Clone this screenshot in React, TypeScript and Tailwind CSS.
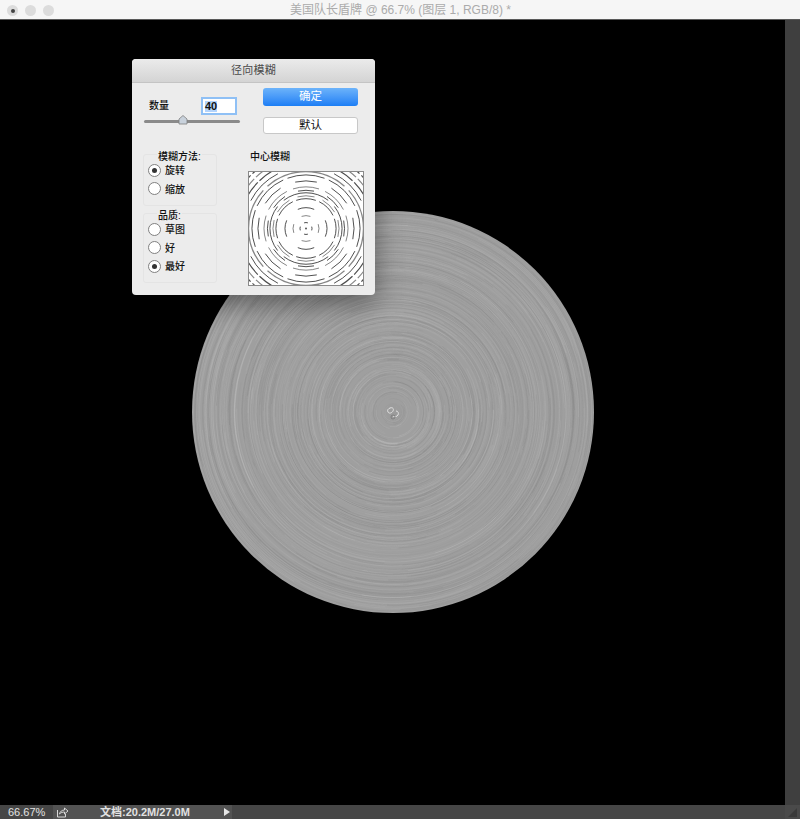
import React from 'react';

const FONT = '"Liberation Sans", "Noto Sans CJK SC", sans-serif';

// small seeded random so the disc looks the same on every render
const makeRandom = (seed: number) => () => {
  seed = (seed * 1664525 + 1013904223) % 4294967296;
  return seed / 4294967296;
};

const polar = (cx: number, cy: number, r: number, a: number) => ({
  x: cx + r * Math.cos(a),
  y: cy + r * Math.sin(a),
});

const arcPath = (cx: number, cy: number, r: number, start: number, sweep: number) => {
  const a = polar(cx, cy, r, start);
  const b = polar(cx, cy, r, start + sweep);
  return `M${a.x.toFixed(1)} ${a.y.toFixed(1)}A${r} ${r} 0 ${sweep > Math.PI ? 1 : 0} 1 ${b.x.toFixed(1)} ${b.y.toFixed(1)}`;
};

const discArcs = (() => {
  const random = makeRandom(42);
  const arcs: { d: string; light: boolean; o: number; w: number }[] = [];
  for (let r = 3; r < 200; r += 0.7) {
    const count = r < 30 ? 1 : 4;
    for (let i = 0; i < count; i++) {
      arcs.push({
        d: arcPath(201, 201, r, random() * Math.PI * 2, 0.6 + random() * 1.8),
        light: random() > 0.5,
        o: 0.03 + random() * 0.08,
        w: 0.5 + random() * 0.4,
      });
    }
  }
  return arcs;
})();

const BlurDisc = () => (
  <svg width="402" height="402" viewBox="0 0 402 402" className="absolute left-[192px] top-[191px]">
    <circle cx="201" cy="201" r="201" fill="#9f9f9f" />
    {discArcs.map((a, i) => (
      <path key={i} d={a.d} fill="none" stroke={a.light ? '#ffffff' : '#444444'} strokeOpacity={a.o} strokeWidth={a.w} />
    ))}
    <circle cx="201" cy="201" r="26" fill="none" stroke="#c4c4c4" strokeOpacity="0.25" strokeWidth="1" />
    <circle cx="201" cy="201" r="46" fill="none" stroke="#c4c4c4" strokeOpacity="0.18" strokeWidth="1" />
    <circle cx="201" cy="201" r="9" fill="#999999" fillOpacity="0.4" />
    <path d="M198 197c3-1 4 1 3 3s-4 3-5 1 0-3 2-4zM204 200c2 0 3 2 2 4s-4 2-5 1" fill="none" stroke="#e2e2e2" strokeWidth="1" />
    <circle cx="201" cy="206" r="2" fill="none" stroke="#777777" strokeWidth="0.8" />
  </svg>
);

// n arcs per ring (4 = on the axes, 8 = axes and diagonals), half = half length in degrees
const previewRings = [
  { r: 6, n: 4, half: 18, w: 1 },
  { r: 13, n: 4, half: 20, w: 1 },
  { r: 21, n: 4, half: 23, w: 1 },
  { r: 30, n: 8, half: 19, w: 1 },
  { r: 33, n: 8, half: 15, w: 1 },
  { r: 36, n: 4, half: 38, w: 1 },
  { r: 38.500, n: 8, half: 12, w: 1 },
  { r: 42, n: 8, half: 18, w: 1 },
  { r: 48, n: 8, half: 13, w: 1 },
  { r: 54, n: 8, half: 20, w: 1 },
  { r: 57.500, n: 4, half: 42, w: 1.300 },
  { r: 62, n: 8, half: 18, w: 1 },
  { r: 67, n: 4, half: 44, w: 1.200 },
  { r: 72, n: 4, half: 44, w: 1.200 },
  { r: 77, n: 4, half: 44, w: 1.200 },
  { r: 82, n: 4, half: 44, w: 1.200 },
];

const previewArcs = previewRings.flatMap((ring, ringIndex) =>
  Array.from({ length: ring.n }, (_, i) => ({
    key: `${ringIndex}-${i}`,
    d: arcPath(58, 58, ring.r, (i * 2 * Math.PI) / ring.n - (ring.half * Math.PI) / 180, (ring.half * Math.PI) / 90),
    w: ring.w,
    o: ringIndex % 3 === 1 ? 0.55 : 0.8,
  }))
);

const Preview = () => (
  <svg width="116" height="115" viewBox="0 0 116 116" preserveAspectRatio="none" className="block bg-white">
    {previewArcs.map((a) => (
      <path key={a.key} d={a.d} fill="none" stroke="#222222" strokeOpacity={a.o} strokeWidth={a.w} />
    ))}
    <circle cx="58" cy="58" r="1" fill="#555555" />
    <rect x="0.5" y="0.5" width="115" height="115" fill="none" stroke="#8a8a8a" />
  </svg>
);

const Radio = ({ label, checked }: { label: string; checked?: boolean }) => (
  <div className="flex h-[18.5px] items-center gap-[4px]">
    <span className="mt-[-2px] flex h-[13px] w-[13px] items-center justify-center rounded-full border border-[#808080] bg-white">
      {checked && <span className="h-[5px] w-[5px] rounded-full bg-[#333333]" />}
    </span>
    <span className="text-[10px] font-medium leading-none text-[#111111]">{label}</span>
  </div>
);

const GroupBox = ({ title, className, children }: { title: string; className: string; children: React.ReactNode }) => (
  <div className={`relative w-[74px] rounded-[3px] border border-[#e4e4e4] pl-[4px] ${className}`}>
    <span className="absolute left-[13px] top-[-3px] bg-[#ececec] px-[1px] text-[10px] font-medium leading-none text-[#111111]">
      {title}
    </span>
    {children}
  </div>
);

const BlurDialog = () => (
  <div className="absolute left-[132px] top-[39px] h-[236px] w-[243px] overflow-hidden rounded-[4px] bg-[#ececec] shadow-[0_8px_28px_rgba(0,0,0,0.45)]">
    <div className="flex h-[24px] items-center justify-center border-b border-[#c4c4c4] bg-gradient-to-b from-[#ebebeb] to-[#d4d4d4] text-[11px] tracking-[0.3px] text-[#4a4a4a]">
      径向模糊
    </div>
    <div className="flex">
      <div className="w-[116px] pl-[11px]">
        <div className="flex items-start pl-[6px] pt-[16px]">
          <span className="mt-[-1px] w-[54px] text-[10px] font-medium leading-[16px] text-[#111111]">数量</span>
          <span className="flex h-[14px] w-[32px] items-center bg-white pl-[2px] text-[11px] font-bold leading-none text-[#111111] shadow-[0_0_0_2px_#8fc0f5]">
            <span className="bg-[#b3d4fc]">40</span>
          </span>
        </div>
        <div className="relative ml-[1px] mt-[3px] h-[9px] w-[96px]">
          <div className="absolute left-0 right-0 top-[3px] h-[3px] rounded-full bg-[#8a8a8a]" />
          <svg width="10" height="10" viewBox="0 0 10 10" className="absolute left-[34px] top-[-2px]">
            <path d="M5 .5 9 4v5H1V4z" fill="#c9d2dc" stroke="#7f7f7f" strokeWidth="0.8" />
          </svg>
        </div>
        <GroupBox title="模糊方法:" className="mt-[28px] h-[52px] pt-[7px]">
          <Radio label="旋转" checked />
          <Radio label="缩放" />
        </GroupBox>
        <GroupBox title="品质:" className="mt-[7px] h-[70px] pt-[7px]">
          <Radio label="草图" />
          <Radio label="好" />
          <Radio label="最好" checked />
        </GroupBox>
      </div>
      <div className="flex-1">
        <div className="ml-[15px] mt-[5px] flex h-[18px] w-[95px] items-center justify-center rounded-[3px] bg-gradient-to-b from-[#6cb3fa] to-[#1b7ef5] text-[11.5px] text-white">
          确定
        </div>
        <div className="ml-[15px] mt-[11px] flex h-[17px] w-[95px] items-center justify-center rounded-[3px] border border-[#c8c8c8] bg-white text-[11.5px] text-[#111111]">
          默认
        </div>
        <div className="ml-[2px] mt-[18px] text-[10px] font-medium leading-none text-[#111111]">中心模糊</div>
        <div className="mt-[9px]">
          <Preview />
        </div>
      </div>
    </div>
  </div>
);

const TitleBar = () => (
  <div className="relative flex h-[20px] shrink-0 items-center justify-center border-b border-[#5a5a5a] bg-[#f6f6f6]">
    <div className="absolute left-[7px] top-[5px] flex gap-[7px]">
      <span className="flex h-[11px] w-[11px] items-center justify-center rounded-full bg-[#dcdcdc]">
        <span className="h-[4px] w-[4px] rounded-full bg-[#444444]" />
      </span>
      <span className="h-[11px] w-[11px] rounded-full bg-[#dcdcdc]" />
      <span className="h-[11px] w-[11px] rounded-full bg-[#dcdcdc]" />
    </div>
    <span className="ml-[1px] text-[12px] leading-none text-[#ababab]">美国队长盾牌 @ 66.7% (图层 1, RGB/8) *</span>
  </div>
);

const StatusBar = () => (
  <div className="flex h-[14px] shrink-0 items-center bg-[#464646] text-[11px] leading-none text-[#e2e2e2]">
    <span className="w-[53px] pl-[8px]">66.67%</span>
    <div className="flex h-full w-[179px] items-center bg-[#535353]">
      <svg width="13" height="11" viewBox="0 0 13 11" className="ml-[3px]">
        <path d="M1.500 3v7h8V7M3.500 7c.5-2.500 2.500-4 5-4V1L12 4 8.500 7V5C6.500 5 5 5.500 3.500 7z" fill="none" stroke="#d8d8d8" strokeWidth="1" />
      </svg>
      <span className="ml-[31px] font-bold">文档:20.2M/27.0M</span>
      <svg width="7" height="8" viewBox="0 0 7 8" className="ml-auto mr-[1px]">
        <path d="M0 0l6 4-6 4z" fill="#e6e6e6" />
      </svg>
    </div>
    <div className="relative ml-auto h-full w-[15px] bg-[#4a4a4a]">
      <svg width="11" height="11" viewBox="0 0 11 11" className="absolute left-[2px] top-[2px]">
        <path d="M10 1v9H1z" fill="#3a3a3a" />
      </svg>
    </div>
  </div>
);

const App: React.FC = () => {
  return (
    <div className="flex h-[819px] w-[800px] flex-col overflow-hidden bg-black" style={{ fontFamily: FONT }}>
      <TitleBar />
      <div className="flex flex-1">
        <div className="relative flex-1 bg-black">
          <BlurDisc />
          <BlurDialog />
        </div>
        <div className="w-[15px] bg-[#3f3f3f]" />
      </div>
      <StatusBar />
    </div>
  );
};

export default App;
